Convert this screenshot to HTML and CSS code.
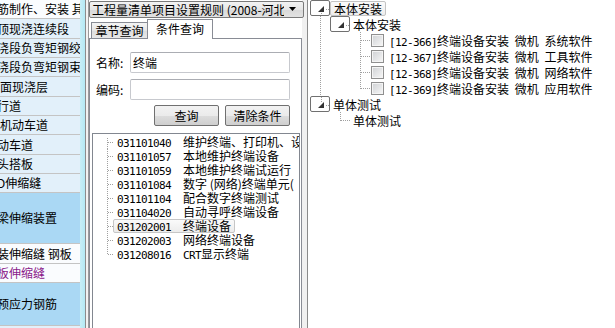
FILE: index.html
```html
<!DOCTYPE html>
<html lang="zh-CN">
<head>
<meta charset="utf-8">
<title>清单查询</title>
<link rel="stylesheet" href="styles.css">
</head>
<body>
<div class="app">
  <div class="left">
    <div class="row white"><span class="t">筋制作、安装 其他</span></div>
    <div class="row"><span class="t">顶现浇连续段</span></div>
    <div class="row"><span class="t">浇段负弯矩钢绞线</span></div>
    <div class="row"><span class="t">浇段负弯矩钢束</span></div>
    <div class="row"><span class="t full">面现浇层</span></div>
    <div class="row"><span class="t">行道</span></div>
    <div class="row"><span class="t full">机动车道</span></div>
    <div class="row"><span class="t">动车道</span></div>
    <div class="row"><span class="t">头搭板</span></div>
    <div class="row"><span class="t">D伸缩缝</span></div>
    <div class="row tall"><span class="t">梁伸缩装置</span></div>
    <div class="row white"><span class="t">装伸缩缝 钢板</span></div>
    <div class="row white purple"><span class="t">板伸缩缝</span></div>
    <div class="row tall2"><span class="t">预应力钢筋</span></div>
    <div class="row"></div>
  </div>
  <div class="edge"></div>
  <div class="mid">
    <div class="combo">
      <span class="combo-text">工程量清单项目设置规则 (2008-河北</span>
      <svg class="combo-arrow" width="9" height="5" viewBox="0 0 9 5"><path d="M1 0 H8 L4.5 4 Z" fill="#000"/></svg>
    </div>
    <div class="tabs">
      <div class="tab">章节查询</div>
      <div class="tab active">条件查询</div>
    </div>
    <div class="page">
      <div class="field">
        <span class="label">名称:</span>
        <div class="input">终端</div>
      </div>
      <div class="field">
        <span class="label">编码:</span>
        <div class="input"></div>
      </div>
      <div class="btns">
        <div class="btn">查询</div>
        <div class="btn">清除条件</div>
      </div>
      <div class="list">
        <div class="li first"><i class="mc"></i><span class="item"><span class="code cw">031101040</span>维护终端、打印机、设备</span></div>
        <div class="li"><i class="mc"></i><span class="item"><span class="code cw">031101057</span>本地维护终端设备</span></div>
        <div class="li"><i class="mc"></i><span class="item"><span class="code cw">031101059</span>本地维护终端试运行</span></div>
        <div class="li"><i class="mc"></i><span class="item"><span class="code cw">031101084</span>数字 (网络)终端单元(</span></div>
        <div class="li"><i class="mc"></i><span class="item"><span class="code cw">031101104</span>配合数字终端测试</span></div>
        <div class="li"><i class="mc"></i><span class="item"><span class="code cw">031104020</span>自动寻呼终端设备</span></div>
        <div class="li"><i class="mc"></i><span class="item sel"><span class="code cw">031202001</span>终端设备</span></div>
        <div class="li"><i class="mc"></i><span class="item"><span class="code cw">031202003</span>网络终端设备</span></div>
        <div class="li last"><i class="mc"></i><span class="item"><span class="code cw">031208016</span><span class="code">CRT</span>显示终端</span></div>
      </div>
    </div>
  </div>
  <div class="splitter"></div>
  <div class="right">
    <div class="tr">
      <i class="rc btn down"><svg width="20" height="16" viewBox="0 0 20 16"><path d="M13 5 L13 11 L7 11 Z" fill="#333"/></svg></i>
      <span class="node sel">本体安装</span>
    </div>
    <div class="tr">
      <i class="rc v"></i>
      <i class="rc btn"><svg width="20" height="16" viewBox="0 0 20 16"><path d="M13 5 L13 11 L7 11 Z" fill="#333"/></svg></i>
      <span class="node">本体安装</span>
    </div>
    <div class="tr">
      <i class="rc v"></i><i class="rc"></i><i class="rc tee"></i>
      <i class="cb"></i><span class="node leaf"><span class="code">[12-366]</span>终端设备安装 微机 系统软件</span>
    </div>
    <div class="tr">
      <i class="rc v"></i><i class="rc"></i><i class="rc tee"></i>
      <i class="cb"></i><span class="node leaf"><span class="code">[12-367]</span>终端设备安装 微机 工具软件</span>
    </div>
    <div class="tr">
      <i class="rc v"></i><i class="rc"></i><i class="rc tee"></i>
      <i class="cb"></i><span class="node leaf"><span class="code">[12-368]</span>终端设备安装 微机 网络软件</span>
    </div>
    <div class="tr">
      <i class="rc v"></i><i class="rc"></i><i class="rc elbow"></i>
      <i class="cb"></i><span class="node leaf"><span class="code">[12-369]</span>终端设备安装 微机 应用软件</span>
    </div>
    <div class="tr">
      <i class="rc btn up"><svg width="20" height="16" viewBox="0 0 20 16"><path d="M13 5 L13 11 L7 11 Z" fill="#333"/></svg></i>
      <span class="node">单体测试</span>
    </div>
    <div class="tr">
      <i class="rc"></i><i class="rc elbow"></i>
      <span class="node">单体测试</span>
    </div>
  </div>
</div>
</body>
</html>
```
FILE: styles.css
```css
* { box-sizing: border-box; margin: 0; padding: 0; }
html, body { width: 615px; height: 328px; overflow: hidden; background: #fff; }
body {
  font-family: "Noto Sans CJK SC", "Noto Sans", sans-serif;
  font-size: 12px;
  line-height: 14px;
  color: #000;
}
.app { display: flex; height: 346px; }

/* left list */
.left { width: 80px; flex: none; overflow: hidden; background: #fff; }
.row {
  height: 19.35px;
  border-bottom: 1px solid #c4c4c4;
  background: #e2f0fa;
  display: flex;
  align-items: center;
  white-space: nowrap;
  overflow: hidden;
}
.row .t { margin-left: -3px; }
.row .t.full { margin-left: 0; }
.row.white { background: #fafcfe; }
.row.purple { color: #8a1a8a; }
.row.tall { height: 51px; background: #aad8f4; }
.row.tall2 { height: 43px; background: #aad8f4; }

.edge {
  width: 9px; flex: none;
  background: linear-gradient(to right, #c9eef6 0, #b3e9f4 5px, #8c8c8c 5px, #8c8c8c 6px, #f2f2f2 6px, #f2f2f2 8px, #9a9a9a 8px);
}

/* middle panel */
.mid {
  width: 213px; flex: none;
  padding-top: 1px;
  display: flex; flex-direction: column;
  background: #fff;
}
.code {
  font-family: "DejaVu Sans Mono", "Liberation Mono", monospace;
  font-size: 11px;
  letter-spacing: -0.62px;
}
.combo {
  height: 17px;
  margin-right: -2px;
  border: 1px solid #7a7a7a;
  border-radius: 2px;
  background: linear-gradient(#f3f3f3, #e6e6e6 50%, #d9d9d9 51%, #e2e2e2);
  display: flex; align-items: center;
  padding-left: 2px;
  white-space: nowrap;
  overflow: hidden;
  position: relative;
  z-index: 2;
}
.combo-text { flex: 1; overflow: hidden; }
.combo-arrow { flex: none; margin: 0 6px 0 4px; }

.tabs { display: flex; height: 19px; margin-top: 1px; padding-left: 2px; align-items: flex-end; position: relative; z-index: 1; }
.tab {
  height: 16px;
  width: 57px;
  border: 1px solid #898c95;
  border-bottom: none;
  background: linear-gradient(#f4f4f4, #e6e6e6 50%, #dcdcdc 51%, #e8e8e8);
  text-align: center;
  line-height: 15px;
}
.tab.active {
  width: 66px;
  height: 20px;
  margin-bottom: -1px;
  margin-left: -1px;
  background: #fff;
  line-height: 18px;
}

.page {
  flex: 1;
  border: 1px solid #898c95;
  background: #fff;
  padding: 13px 1px 0 2px;
  display: flex; flex-direction: column;
}
.field { display: flex; align-items: center; margin-bottom: 6px; }
.label { width: 38px; padding-left: 4px; }
.input {
  width: 160px; height: 21px;
  border: 1px solid #c7c9ce;
  border-top-color: #abadb3;
  border-radius: 2px;
  padding-left: 2px;
  line-height: 19px;
}
.btns { display: flex; justify-content: flex-end; gap: 6px; padding-right: 10px; margin-top: -1px; }
.btn {
  width: 65px; height: 21px;
  border: 1px solid #707070;
  border-radius: 2px;
  background: linear-gradient(#f2f2f2, #ebebeb 50%, #dddddd 51%, #cfcfcf);
  text-align: center;
  line-height: 19px;
}
.list {
  margin-top: 7px;
  flex: 1;
  border: 1px solid #828790;
  padding: 1px 0 0 14px;
  overflow: hidden;
  white-space: nowrap;
}
.li { height: 14px; display: flex; align-items: center; }
.mc {
  width: 6px; height: 14px; flex: none;
  background:
    repeating-linear-gradient(#a0a0a0 0 1px, transparent 1px 2px) 0 0 / 1px 100% no-repeat,
    repeating-linear-gradient(to right, #a0a0a0 0 1px, transparent 1px 2px) 1px 7px / 100% 1px no-repeat;
}
.li.first .mc {
  background:
    repeating-linear-gradient(#a0a0a0 0 1px, transparent 1px 2px) 0 3px / 1px 11px no-repeat,
    repeating-linear-gradient(to right, #a0a0a0 0 1px, transparent 1px 2px) 1px 7px / 100% 1px no-repeat;
}
.li.last .mc {
  background:
    repeating-linear-gradient(#a0a0a0 0 1px, transparent 1px 2px) 0 0 / 1px 8px no-repeat,
    repeating-linear-gradient(to right, #a0a0a0 0 1px, transparent 1px 2px) 1px 7px / 100% 1px no-repeat;
}
.item { border: 1px solid transparent; padding: 0 3px; height: 14px; line-height: 12px; border-radius: 2px; }
.item.sel { border-color: #c6c6c6; background: linear-gradient(#fafafa, #ececec); }
.cw { display: inline-block; width: 66px; }

.splitter { width: 6px; flex: none; background: #f0f0f0; border-right: 1px solid #8a8a8a; }

/* right tree */
.right { flex: 1; padding-left: 2px; white-space: nowrap; overflow: hidden; }
.tr { height: 16px; display: flex; align-items: center; }
.rc {
  width: 20px; height: 16px; flex: none; display: block;
}
.rc svg { display: block; }
.rc.v { background: repeating-linear-gradient(#a0a0a0 0 1px, transparent 1px 2px) 10px 0 / 1px 100% no-repeat; }
.rc.tee {
  background:
    repeating-linear-gradient(#a0a0a0 0 1px, transparent 1px 2px) 10px 0 / 1px 100% no-repeat,
    repeating-linear-gradient(to right, #a0a0a0 0 1px, transparent 1px 2px) 11px 8px / 9px 1px no-repeat;
}
.rc.elbow {
  background:
    repeating-linear-gradient(#a0a0a0 0 1px, transparent 1px 2px) 10px 0 / 1px 9px no-repeat,
    repeating-linear-gradient(to right, #a0a0a0 0 1px, transparent 1px 2px) 11px 8px / 9px 1px no-repeat;
}
.rc.btn {
  background: repeating-linear-gradient(to right, #a0a0a0 0 1px, transparent 1px 2px) 15px 8px / 5px 1px no-repeat;
}
.rc.btn.down {
  background:
    repeating-linear-gradient(#a0a0a0 0 1px, transparent 1px 2px) 10px 12px / 1px 4px no-repeat,
    repeating-linear-gradient(to right, #a0a0a0 0 1px, transparent 1px 2px) 15px 8px / 5px 1px no-repeat;
}
.rc.btn.up {
  background:
    repeating-linear-gradient(#a0a0a0 0 1px, transparent 1px 2px) 10px 0 / 1px 5px no-repeat,
    repeating-linear-gradient(to right, #a0a0a0 0 1px, transparent 1px 2px) 15px 8px / 5px 1px no-repeat;
}
.node { padding: 0 2px; border: 1px solid transparent; height: 15px; line-height: 13px; border-radius: 2px; }
.node.sel { border-color: #c3c3c3; background: linear-gradient(#fbfbfb, #ededed); padding: 0 3px; }
.node.leaf { padding-left: 4px; word-spacing: 3px; }
.node.leaf .code { word-spacing: 0; }
.cb {
  width: 13px; height: 13px; flex: none; display: block;
  border: 1px solid #8f8f8f;
  background: linear-gradient(135deg, #cfd1d4, #f7f7f7);
  box-shadow: inset 0 0 0 1px #f4f4f4;
  margin-left: 1px;
}
```
